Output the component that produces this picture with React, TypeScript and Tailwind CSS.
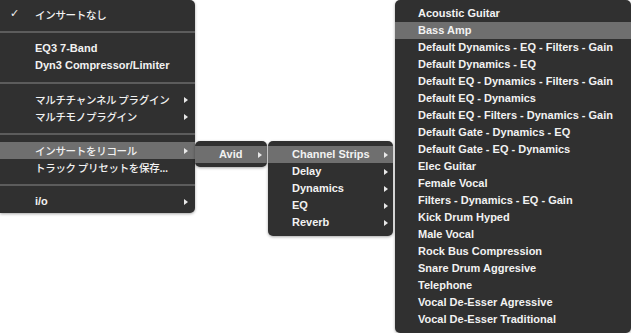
import React from 'react';

type Item =
  | { kind: 'sep' }
  | { kind: 'item'; label: string; check?: boolean; sub?: boolean; active?: boolean };

const font =
  "font-['Liberation_Sans','Noto_Sans_CJK_JP',sans-serif] text-[11px] font-bold text-[#f2f2f2]";

const isJa = (s: string) => /[\u3000-\u30ff\u4e00-\u9fff]/.test(s);

function Arrow() {
  return (
    <svg width="4" height="6" viewBox="0 0 4 6" className="shrink-0">
      <path d="M0 0 L4 3 L0 6 Z" fill="#e8e8e8" />
    </svg>
  );
}

function Row({
  item,
  textLeft,
  arrowRight,
}: {
  item: Item;
  textLeft: number;
  arrowRight: number;
}) {
  if (item.kind === 'sep') {
    return (
      <div className="h-[17px] flex items-center">
        <div className="h-[2px] w-full bg-[#5c5c5c]" />
      </div>
    );
  }
  return (
    <div
      className={`h-[17px] flex items-center relative whitespace-nowrap ${
        item.active ? 'bg-[#6f6f6f]' : ''
      }`}
      style={{ paddingLeft: textLeft, paddingRight: arrowRight }}
    >
      {item.check ? (
        <span className="absolute left-[10px] top-0 h-[17px] flex items-center font-['DejaVu_Sans',sans-serif] text-[11px] font-bold">
          ✓
        </span>
      ) : null}
      <span
        className={`flex-1 ${
          isJa(item.label)
            ? "font-['Noto_Sans_CJK_JP',sans-serif] text-[10.5px] font-medium tracking-[-0.3px]"
            : ''
        }`}
      >
        {item.label}
      </span>
      {item.sub ? <Arrow /> : null}
    </div>
  );
}

function Menu({
  items,
  className,
  textLeft,
  arrowRight = 7,
  padTop = 5,
  padBottom = 4,
}: {
  items: Item[];
  className: string;
  textLeft: number;
  arrowRight?: number;
  padTop?: number;
  padBottom?: number;
}) {
  return (
    <div
      className={`absolute bg-[#303030] flex flex-col shadow-[0_1px_3px_rgba(0,0,0,0.35)] ${font} ${className}`}
      style={{ paddingTop: padTop, paddingBottom: padBottom }}
    >
      {items.map((it, i) => (
        <Row key={i} item={it} textLeft={textLeft} arrowRight={arrowRight} />
      ))}
    </div>
  );
}

const mainItems: Item[] = [
  { kind: 'item', label: 'インサートなし', check: true },
  { kind: 'sep' },
  { kind: 'item', label: 'EQ3 7-Band' },
  { kind: 'item', label: 'Dyn3 Compressor/Limiter' },
  { kind: 'sep' },
  { kind: 'item', label: 'マルチチャンネル プラグイン', sub: true },
  { kind: 'item', label: 'マルチモノプラグイン', sub: true },
  { kind: 'sep' },
  { kind: 'item', label: 'インサートをリコール', sub: true, active: true },
  { kind: 'item', label: 'トラック プリセットを保存...' },
  { kind: 'sep' },
  { kind: 'item', label: 'i/o', sub: true },
];

const avidItems: Item[] = [{ kind: 'item', label: 'Avid', sub: true, active: true }];

const categoryItems: Item[] = [
  { kind: 'item', label: 'Channel Strips', sub: true, active: true },
  { kind: 'item', label: 'Delay', sub: true },
  { kind: 'item', label: 'Dynamics', sub: true },
  { kind: 'item', label: 'EQ', sub: true },
  { kind: 'item', label: 'Reverb', sub: true },
];

const presets = [
  'Acoustic Guitar',
  'Bass Amp',
  'Default Dynamics - EQ - Filters - Gain',
  'Default Dynamics - EQ',
  'Default EQ - Dynamics - Filters - Gain',
  'Default EQ - Dynamics',
  'Default EQ - Filters - Dynamics - Gain',
  'Default Gate - Dynamics - EQ',
  'Default Gate - EQ - Dynamics',
  'Elec Guitar',
  'Female Vocal',
  'Filters - Dynamics - EQ - Gain',
  'Kick Drum Hyped',
  'Male Vocal',
  'Rock Bus Compression',
  'Snare Drum Aggresive',
  'Telephone',
  'Vocal De-Esser Agressive',
  'Vocal De-Esser Traditional',
];

const presetItems: Item[] = presets.map((p) => ({
  kind: 'item',
  label: p,
  active: p === 'Bass Amp',
}));

export default function App() {
  return (
    <div className="relative w-[631px] h-[333px] bg-white overflow-hidden">
      <Menu
        items={mainItems}
        className="left-0 top-0 w-[195px] rounded-r-[5px]"
        textLeft={35}
        arrowRight={7}
        padTop={6}
        padBottom={3}
      />
      <Menu
        items={avidItems}
        className="left-[195px] top-[141px] w-[72px] rounded-[5px]"
        textLeft={24}
        arrowRight={5}
        padTop={5}
        padBottom={4}
      />
      <Menu
        items={categoryItems}
        className="left-[268px] top-[141px] w-[125px] rounded-[5px]"
        textLeft={24}
        arrowRight={5}
        padTop={5}
        padBottom={5}
      />
      <Menu
        items={presetItems}
        className="left-[395px] top-0 w-[236px] rounded-[5px]"
        textLeft={23}
        padTop={5}
        padBottom={5}
      />
    </div>
  );
}
